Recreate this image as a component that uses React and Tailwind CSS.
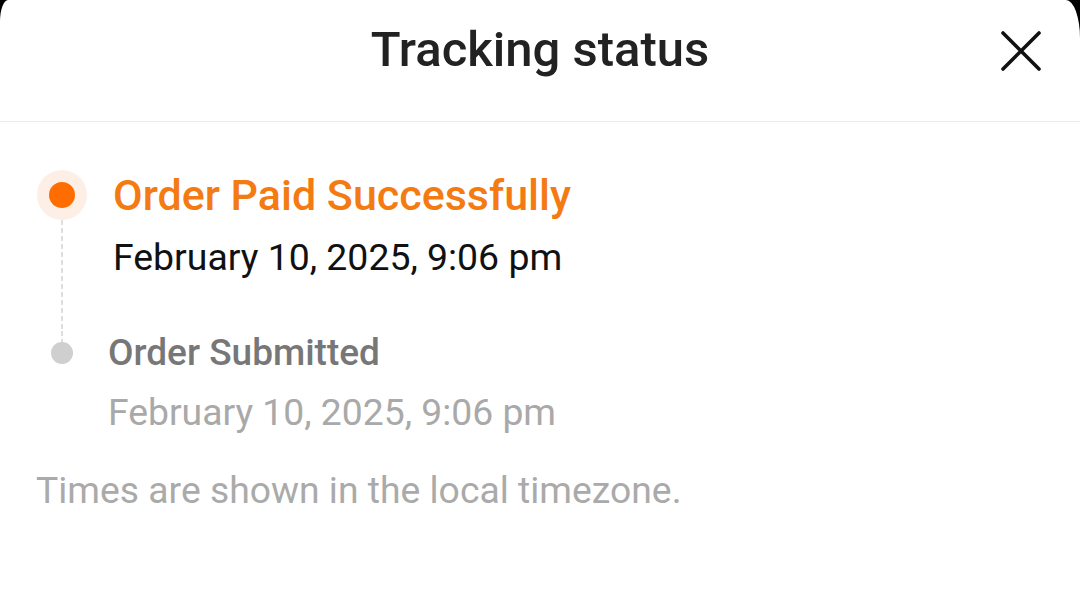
import React from "react";

const CloseIcon = () => (
  <svg width="44" height="44" viewBox="0 0 44 44" fill="none">
    <path
      d="M4 4L40 40M40 4L4 40"
      stroke="#111"
      strokeWidth="3.6"
      strokeLinecap="round"
    />
  </svg>
);

const dash =
  "w-[2px] bg-[linear-gradient(to_bottom,#dedede_60%,transparent_60%)] bg-[length:2px_8px]";

export default function App() {
  return (
    <div className="w-[1080px] h-[602px] bg-black overflow-hidden font-['Roboto',_'Liberation_Sans',_sans-serif]">
      <div className="relative h-full bg-white rounded-tl-[8px_22px] rounded-tr-[14px_38px]">
        {/* Header */}
        <div className="h-[122px] pt-[26px] border-b border-[#ebebeb] flex justify-center">
          <h1 className="text-[49px] leading-[48px] font-medium text-[#222]">
            Tracking status
          </h1>
        </div>
        <button className="absolute top-[29px] right-[37px]">
          <CloseIcon />
        </button>

        {/* Timeline */}
        <div className="pt-[48px] pl-[36px]">
          <div className="flex gap-[25px]">
            <div className="w-[52px] flex flex-col items-center">
              <div className="w-[50px] h-[50px] rounded-full bg-[#fdefe5] flex items-center justify-center shrink-0">
                <div className="w-[26px] h-[26px] rounded-full bg-[#ff6d00]" />
              </div>
              <div className={`flex-1 ${dash}`} />
            </div>
            <div className="pb-[52px]">
              <div className="text-[43px] leading-[50px] font-medium text-[#f47b12]">
                Order Paid Successfully
              </div>
              <div className="mt-[15px] text-[37.4px] leading-[44px] text-[#111]">
                February 10, 2025, 9:06 pm
              </div>
            </div>
          </div>

          <div className="flex gap-[20px]">
            <div className="w-[52px] h-[44px] flex flex-col items-center">
              <div className={`h-[11px] ${dash}`} />
              <div className="w-[22px] h-[22px] rounded-full bg-[#cfcfcf]" />
            </div>
            <div>
              <div className="text-[37px] leading-[44px] font-medium text-[#777]">
                Order Submitted
              </div>
              <div className="mt-[15px] text-[37.3px] leading-[44px] text-[#a9a9a9]">
                February 10, 2025, 9:06 pm
              </div>
            </div>
          </div>

          <p className="mt-[34px] text-[37.3px] leading-[44px] text-[#aaa]">
            Times are shown in the local timezone.
          </p>
        </div>
      </div>
    </div>
  );
}
